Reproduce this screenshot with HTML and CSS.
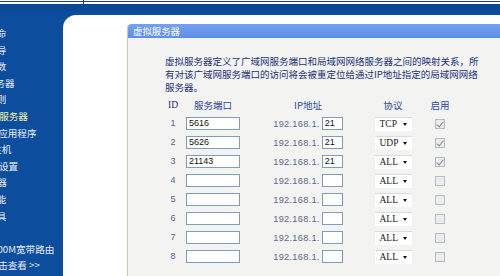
FILE: index.html
```html
<!DOCTYPE html>
<html lang="zh-CN">
<head>
<meta charset="utf-8">
<title>虚拟服务器</title>
<link rel="stylesheet" href="styles.css">
</head>
<body>
<div class="topbar"><div class="topcell"></div><div class="topcell wide"></div></div>
<div class="band"></div>
<div class="main">
  <nav class="sidebar">
    <ul class="menu">
      <li class="l1">使用寿命</li>
      <li class="l1">设置向导</li>
      <li class="l1">网络参数</li>
      <li class="l1 dhcp">DHCP服务器</li>
      <li class="l1">转发规则</li>
      <li class="l2 active vs">虚拟服务器</li>
      <li class="l2 app">特殊应用程序</li>
      <li class="l2 dmz">DMZ主机</li>
      <li class="l2 upnp">UPnP设置</li>
      <li class="l1 sec">安全设置器</li>
      <li class="l1">路由功能</li>
      <li class="l1">系统工具</li>
      <li class="blank"></li>
      <li class="promo">更多300M宽带路由</li>
      <li class="promo more">请点击查看 &gt;&gt;</li>
    </ul>
  </nav>
  <section class="content">
    <div class="panel">
      <div class="panel-head">虚拟服务器</div>
      <div class="panel-body">
        <p class="desc">虚拟服务器定义了广域网服务端口和局域网网络服务器之间的映射关系，所<br>有对该广域网服务端口的访问将会被重定位给通过IP地址指定的局域网网络<br>服务器。</p>
        <div class="grid">
          <div class="th">ID</div><div class="th">服务端口</div><div class="th">IP地址</div><div class="th">协议</div><div class="th">启用</div>

          <div class="id">1</div><div class="cell"><span class="inp port">5616</span></div><div class="cell"><span class="ip">192.168.1.</span><span class="inp host">21</span></div><div class="cell"><span class="sel">TCP<i class="arrow"></i></span></div><div class="cell"><span class="chk on"></span></div>

          <div class="id">2</div><div class="cell"><span class="inp port">5626</span></div><div class="cell"><span class="ip">192.168.1.</span><span class="inp host">21</span></div><div class="cell"><span class="sel">UDP<i class="arrow"></i></span></div><div class="cell"><span class="chk on"></span></div>

          <div class="id">3</div><div class="cell"><span class="inp port">21143</span></div><div class="cell"><span class="ip">192.168.1.</span><span class="inp host">21</span></div><div class="cell"><span class="sel">ALL<i class="arrow"></i></span></div><div class="cell"><span class="chk on"></span></div>

          <div class="id">4</div><div class="cell"><span class="inp port"></span></div><div class="cell"><span class="ip">192.168.1.</span><span class="inp host"></span></div><div class="cell"><span class="sel">ALL<i class="arrow"></i></span></div><div class="cell"><span class="chk"></span></div>

          <div class="id">5</div><div class="cell"><span class="inp port"></span></div><div class="cell"><span class="ip">192.168.1.</span><span class="inp host"></span></div><div class="cell"><span class="sel">ALL<i class="arrow"></i></span></div><div class="cell"><span class="chk"></span></div>

          <div class="id">6</div><div class="cell"><span class="inp port"></span></div><div class="cell"><span class="ip">192.168.1.</span><span class="inp host"></span></div><div class="cell"><span class="sel">ALL<i class="arrow"></i></span></div><div class="cell"><span class="chk"></span></div>

          <div class="id">7</div><div class="cell"><span class="inp port"></span></div><div class="cell"><span class="ip">192.168.1.</span><span class="inp host"></span></div><div class="cell"><span class="sel">ALL<i class="arrow"></i></span></div><div class="cell"><span class="chk"></span></div>

          <div class="id">8</div><div class="cell"><span class="inp port"></span></div><div class="cell"><span class="ip">192.168.1.</span><span class="inp host"></span></div><div class="cell"><span class="sel">ALL<i class="arrow"></i></span></div><div class="cell"><span class="chk"></span></div>
        </div>
      </div>
    </div>
  </section>
</div>
</body>
</html>
```
FILE: styles.css
```css
* { box-sizing: border-box; }
html, body { margin: 0; padding: 0; }
body {
  width: 500px;
  height: 276px;
  overflow: hidden;
  background: #ffffff;
  font-family: "Liberation Sans", "Noto Sans CJK SC", sans-serif;
  font-size: 9.6px;
}
.topbar {
  display: flex;
  height: 4px;
  background: linear-gradient(#ffffff 0 1px, #24406e 1px 2px, #ffffff 2px);
}
.topcell { width: 84px; border-right: 1px solid #24406e; }
.topcell.wide { flex: 1; border-right: 0; }
.band { height: 11px; background: linear-gradient(#0a4590, #0d4d9e); }
.main {
  display: flex;
  height: 261px;
  background: #0d4d9e;
}
.sidebar {
  width: 63px;
  flex: none;
  overflow: hidden;
  padding-top: 10px;
}
.menu {
  list-style: none;
  margin: 0;
  padding: 0;
  width: 200px;
  font-family: "Noto Sans CJK SC", sans-serif;
  font-size: 9.6px;
  color: #e6eeff;
}
.menu li { height: 16.6px; line-height: 16.6px; white-space: nowrap; }
.menu .l1 { margin-left: -32px; }
.menu .dhcp { margin-left: -40px; }
.menu .vs { margin-left: -20px; }
.menu .app { margin-left: -21px; }
.menu .dmz { margin-left: -28px; }
.menu .upnp { margin-left: -26px; }
.menu .sec { margin-left: -41px; }
.menu .active { color: #f4f4a8; }
.menu .promo { margin-left: -27px; }
.menu .promo.more { margin-left: -21px; }
.content {
  flex: 1;
  background: #ffffff;
  border-top-left-radius: 13px;
  padding: 9px 0 0 64px;
  overflow: hidden;
}
.panel {
  width: 420px;
  height: 260px;
  background: #f3f3f1;
  border-left: 1px solid #e3c29a;
  border-top-left-radius: 4px;
}
.panel-head {
  height: 14px;
  line-height: 14px;
  padding-left: 5px;
  background: linear-gradient(#75a2f0, #5d8de6);
  color: #ffffff;
  font-family: "Noto Sans CJK SC", sans-serif;
  font-size: 9.4px;
  border-top-left-radius: 4px;
}
.panel-body { padding: 17px 0 0 35px; }
.desc {
  margin: 0 0 0 2px;
  font-family: "Noto Sans CJK SC", sans-serif;
  font-size: 9.5px;
  line-height: 13px;
  color: #23307a;
  white-space: nowrap;
}
.grid {
  display: grid;
  grid-template-columns: 20px 60px 130px 40px 54px;
  grid-template-rows: 16px repeat(8, 19px);
  margin-top: 4px;
}
.th {
  font-family: "Noto Sans CJK SC", sans-serif;
  font-size: 9.5px;
  color: #2e4a9a;
  text-align: center;
  line-height: 15px;
}
.th:first-child { font-family: "Liberation Serif", serif; color: #24307a; }
.id {
  text-align: center;
  line-height: 19px;
  color: #5a6690;
  font-family: "Liberation Sans", sans-serif;
  font-size: 9px;
}
.cell {
  display: flex;
  align-items: center;
  justify-content: center;
}
.inp {
  height: 13px;
  background: #ffffff;
  border: 1px solid #7f9db9;
  font-family: "Liberation Sans", sans-serif;
  font-size: 9px;
  line-height: 11px;
  color: #111111;
  padding-left: 2px;
}
.port { width: 54px; }
.host { width: 21px; }
.ip {
  font-family: "Liberation Sans", sans-serif;
  font-size: 9.2px;
  color: #5c6890;
  margin-right: 2px;
  letter-spacing: 0.3px;
}
.sel {
  position: relative;
  width: 37px;
  height: 14px;
  background: #ffffff;
  border-top: 1px solid #dcdcdc;
  font-family: "Liberation Serif", serif;
  font-size: 9.5px;
  line-height: 13px;
  color: #1a1a1a;
  padding-left: 5px;
}
.arrow {
  position: absolute;
  right: 5px;
  top: 5px;
  width: 0;
  height: 0;
  border-left: 2.5px solid transparent;
  border-right: 2.5px solid transparent;
  border-top: 3px solid #111111;
}
.chk {
  position: relative;
  width: 10px;
  height: 10px;
  border: 1px solid #b5bcc4;
  background: #ececec;
}
.chk.on::after {
  content: "";
  position: absolute;
  left: 2px;
  top: 0px;
  width: 3px;
  height: 6px;
  border-right: 1.5px solid #8a8a8a;
  border-bottom: 1.5px solid #8a8a8a;
  transform: rotate(40deg);
}
```
